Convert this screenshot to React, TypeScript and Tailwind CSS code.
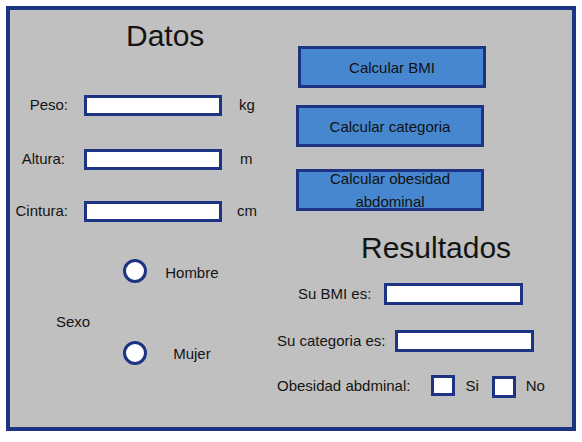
import React from "react";

const font = { fontFamily: '"Liberation Sans", Arial, sans-serif' };

function Box({ className = "" }: { className?: string }) {
  return <div className={`border-[3px] border-[#1d3384] bg-white ${className}`} />;
}

function FieldRow({ label, unit, labelPad = "", unitGap, className = "" }: { label: string; unit: string; labelPad?: string; unitGap: string; className?: string }) {
  return (
    <div className={`flex h-[21px] items-center ${className}`}>
      <span className={`w-[58px] text-right ${labelPad}`}>{label}</span>
      <Box className="ml-[16px] h-[21px] w-[138px]" />
      <span className={unitGap}>{unit}</span>
    </div>
  );
}

function Radio({ label, gap, className = "" }: { label: string; gap: string; className?: string }) {
  return (
    <div className={`flex items-center ${className}`}>
      <div className="h-[24px] w-[24px] rounded-full border-[3px] border-[#1d3384] bg-white" />
      <span className={gap}>{label}</span>
    </div>
  );
}

function ActionButton({ children, className = "" }: { children: React.ReactNode; className?: string }) {
  return (
    <button className={`flex h-[42px] w-[188px] items-center justify-center border-[3px] border-[#1d3384] bg-[#4687cf] text-center leading-[23px] text-[#111] ${className}`}>
      {children}
    </button>
  );
}

export default function App() {
  return (
    <div className="h-[442px] w-[582px] bg-white pl-[6px] pt-[6px]" style={font}>
      <div className="flex h-[425px] w-[570px] border-4 border-[#1d3384] bg-[#c0c0c0] text-[15px] text-[#141414]">
        {/* datos */}
        <div className="flex w-[260px] flex-col">
          <h1 className="ml-[116px] mt-[11px] text-[30px] leading-[30px]">Datos</h1>
          <FieldRow label="Peso:" unit="kg" unitGap="ml-[17px]" className="mt-[44px]" />
          <FieldRow label="Altura:" unit="m" labelPad="pr-[3px]" unitGap="ml-[18px]" className="mt-[33px]" />
          <FieldRow label="Cintura:" unit="cm" unitGap="ml-[15px]" className="mt-[31px]" />

          <div className="mt-[36px] flex items-start">
            <span className="ml-[46px] mt-[53px]">Sexo</span>
            <div className="ml-[33px] flex flex-col">
              <Radio label="Hombre" gap="ml-[18px] mt-[4px]" />
              <Radio label="Mujer" gap="ml-[26px] mt-[2px]" className="mt-[56px]" />
            </div>
          </div>
        </div>

        {/* acciones y resultados */}
        <div className="flex flex-col">
          <ActionButton className="ml-[28px] mt-[36px]">Calcular BMI</ActionButton>
          <ActionButton className="ml-[26px] mt-[17px]">Calcular categoria</ActionButton>
          <ActionButton className="ml-[26px] mt-[22px]">
            Calcular obesidad
            <br />
            abdominal
          </ActionButton>

          <h2 className="ml-[91px] mt-[22px] text-[30px] leading-[30px]">Resultados</h2>

          <div className="ml-[28px] mt-[20px] flex h-[22px] items-center">
            <span>Su BMI es:</span>
            <Box className="ml-[13px] h-[22px] w-[139px]" />
          </div>
          <div className="ml-[7px] mt-[25px] flex h-[22px] items-center">
            <span>Su categoria es:</span>
            <Box className="ml-[10px] h-[22px] w-[139px]" />
          </div>
          <div className="ml-[7px] mt-[22px] flex h-[24px] items-center">
            <span>Obesidad abdminal:</span>
            <Box className="ml-[21px] mb-[2px] h-[21px] w-[24px]" />
            <span className="ml-[10px]">Si</span>
            <Box className="ml-[13px] mt-[2px] h-[22px] w-[24px]" />
            <span className="ml-[10px]">No</span>
          </div>
        </div>
      </div>
    </div>
  );
}
